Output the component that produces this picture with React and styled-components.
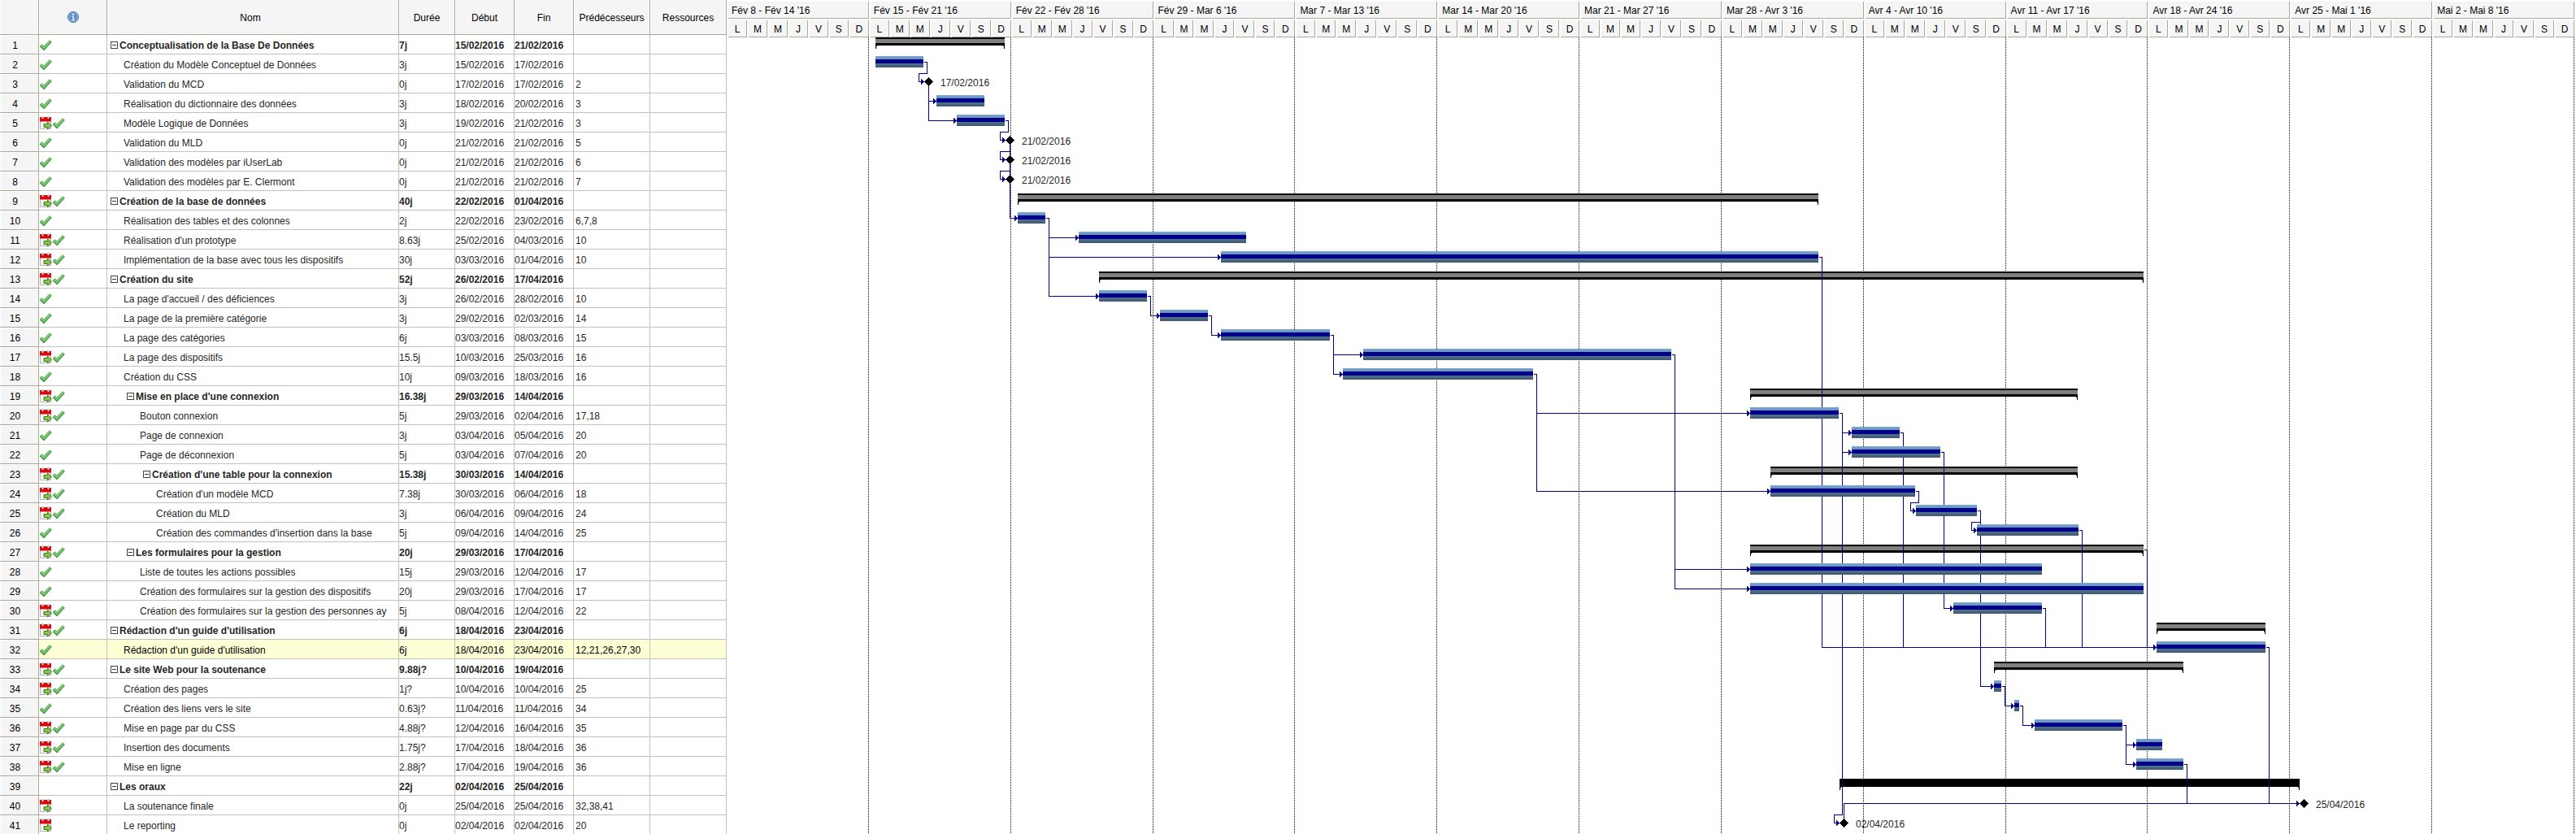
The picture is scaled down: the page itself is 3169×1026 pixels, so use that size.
import React, { useLayoutEffect, useRef, useState } from "react";
import styled, { createGlobalStyle, css } from "styled-components";

const GlobalStyle = createGlobalStyle`
  *, *::before, *::after { box-sizing: border-box; }
  body {
    margin: 0;
    background: #fff;
    color: #262626;
    font-family: "Liberation Sans", Arial, Helvetica, sans-serif;
    font-size: 12px;
    line-height: 14px;
  }
`;

const ROW = 24;
const FRAME = "#aca899";
const GRID = "#c0c0c0";
const NAVY = "#00008b";

/* id, icons (c = calendar, v = check), depth, name, duration, start, end, predecessors, bar start day, bar end day, kind */
const TASKS = [
  [1, "v", 0, "Conceptualisation de la Base De Données", "7j", "15/02/2016", "21/02/2016", "", 7.333, 13.69, "group"],
  [2, "v", 1, "Création du Modèle Conceptuel de Données", "3j", "15/02/2016", "17/02/2016", "", 7.333, 9.69, "task"],
  [3, "v", 1, "Validation du MCD", "0j", "17/02/2016", "17/02/2016", "2", 9.72, 9.72, "milestone"],
  [4, "v", 1, "Réalisation du dictionnaire des données", "3j", "18/02/2016", "20/02/2016", "3", 10.333, 12.69, "task"],
  [5, "cv", 1, "Modèle Logique de Données", "3j", "19/02/2016", "21/02/2016", "3", 11.333, 13.69, "task"],
  [6, "v", 1, "Validation du MLD", "0j", "21/02/2016", "21/02/2016", "5", 13.73, 13.73, "milestone"],
  [7, "v", 1, "Validation des modèles par iUserLab", "0j", "21/02/2016", "21/02/2016", "6", 13.73, 13.73, "milestone"],
  [8, "v", 1, "Validation des modèles par E. Clermont", "0j", "21/02/2016", "21/02/2016", "7", 13.73, 13.73, "milestone"],
  [9, "cv", 0, "Création de la base de données", "40j", "22/02/2016", "01/04/2016", "", 14.333, 53.77, "group"],
  [10, "v", 1, "Réalisation des tables et des colonnes", "2j", "22/02/2016", "23/02/2016", "6,7,8", 14.333, 15.7, "task"],
  [11, "cv", 1, "Réalisation d'un prototype", "8.63j", "25/02/2016", "04/03/2016", "10", 17.333, 25.58, "task"],
  [12, "cv", 1, "Implémentation de la base avec tous les dispositifs", "30j", "03/03/2016", "01/04/2016", "10", 24.333, 53.77, "task"],
  [13, "cv", 0, "Création du site", "52j", "26/02/2016", "17/04/2016", "", 18.333, 69.78, "group"],
  [14, "v", 1, "La page d'accueil / des déficiences", "3j", "26/02/2016", "28/02/2016", "10", 18.333, 20.7, "task"],
  [15, "v", 1, "La page de la première catégorie", "3j", "29/02/2016", "02/03/2016", "14", 21.333, 23.71, "task"],
  [16, "v", 1, "La page des catégories", "6j", "03/03/2016", "08/03/2016", "15", 24.333, 29.71, "task"],
  [17, "cv", 1, "La page des dispositifs", "15.5j", "10/03/2016", "25/03/2016", "16", 31.333, 46.54, "task"],
  [18, "v", 1, "Création du CSS", "10j", "09/03/2016", "18/03/2016", "16", 30.333, 39.72, "task"],
  [19, "cv", 1, "Mise en place d'une connexion", "16.38j", "29/03/2016", "14/04/2016", "", 50.4, 66.54, "group"],
  [20, "cv", 2, "Bouton connexion", "5j", "29/03/2016", "02/04/2016", "17,18", 50.4, 54.76, "task"],
  [21, "v", 2, "Page de connexion", "3j", "03/04/2016", "05/04/2016", "20", 55.41, 57.77, "task"],
  [22, "v", 2, "Page de déconnexion", "5j", "03/04/2016", "07/04/2016", "20", 55.41, 59.77, "task"],
  [23, "cv", 2, "Création d'une table pour la connexion", "15.38j", "30/03/2016", "14/04/2016", "", 51.4, 66.54, "group"],
  [24, "cv", 3, "Création d'un modèle MCD", "7.38j", "30/03/2016", "06/04/2016", "18", 51.4, 58.53, "task"],
  [25, "cv", 3, "Création du MLD", "3j", "06/04/2016", "09/04/2016", "24", 58.57, 61.57, "task"],
  [26, "v", 3, "Création des commandes d'insertion dans la base", "5j", "09/04/2016", "14/04/2016", "25", 61.57, 66.58, "task"],
  [27, "cv", 1, "Les formulaires pour la gestion", "20j", "29/03/2016", "17/04/2016", "", 50.4, 69.78, "group"],
  [28, "v", 2, "Liste de toutes les actions possibles", "15j", "29/03/2016", "12/04/2016", "17", 50.4, 64.77, "task"],
  [29, "v", 2, "Création des formulaires sur la gestion des dispositifs", "20j", "29/03/2016", "17/04/2016", "17", 50.4, 69.78, "task"],
  [30, "cv", 2, "Création des formulaires sur la gestion des personnes ay", "5j", "08/04/2016", "12/04/2016", "22", 60.42, 64.77, "task"],
  [31, "cv", 0, "Rédaction d'un guide d'utilisation", "6j", "18/04/2016", "23/04/2016", "", 70.42, 75.79, "group"],
  [32, "v", 1, "Rédaction d'un guide d'utilisation", "6j", "18/04/2016", "23/04/2016", "12,21,26,27,30", 70.42, 75.79, "task"],
  [33, "cv", 0, "Le site Web pour la soutenance", "9.88j?", "10/04/2016", "19/04/2016", "", 62.42, 71.75, "group"],
  [34, "cv", 1, "Création des pages", "1j?", "10/04/2016", "10/04/2016", "25", 62.42, 62.78, "task"],
  [35, "v", 1, "Création des liens vers le site", "0.63j?", "11/04/2016", "11/04/2016", "34", 63.42, 63.65, "task"],
  [36, "cv", 1, "Mise en page par du CSS", "4.88j?", "12/04/2016", "16/04/2016", "35", 64.42, 68.75, "task"],
  [37, "cv", 1, "Insertion des documents", "1.75j?", "17/04/2016", "18/04/2016", "36", 69.43, 70.7, "task"],
  [38, "cv", 1, "Mise en ligne", "2.88j?", "17/04/2016", "19/04/2016", "36", 69.43, 71.75, "task"],
  [39, "", 0, "Les oraux", "22j", "02/04/2016", "25/04/2016", "", 54.81, 77.47, "open"],
  [40, "c", 1, "La soutenance finale", "0j", "25/04/2016", "25/04/2016", "32,38,41", 77.45, 77.45, "milestone"],
  [41, "c", 1, "Le reporting", "0j", "02/04/2016", "02/04/2016", "20", 54.81, 54.81, "milestone"],
].map(([id, icons, depth, name, duration, start, end, preds, from, to, kind]) => ({
  id, icons, depth, name, duration, start, end, preds, from, to, kind,
  group: kind === "group" || kind === "open",
}));

const WEEKS = [
  "Fév 8 - Fév 14 '16", "Fév 15 - Fév 21 '16", "Fév 22 - Fév 28 '16", "Fév 29 - Mar 6 '16",
  "Mar 7 - Mar 13 '16", "Mar 14 - Mar 20 '16", "Mar 21 - Mar 27 '16", "Mar 28 - Avr 3 '16",
  "Avr 4 - Avr 10 '16", "Avr 11 - Avr 17 '16", "Avr 18 - Avr 24 '16", "Avr 25 - Mai 1 '16",
  "Mai 2 - Mai 8 '16",
];
const DAYS = ["L", "M", "M", "J", "V", "S", "D"];
const SELECTED = 32;

/* ---------- layout ---------- */
const Page = styled.main`
  display: flex;
  align-items: flex-start;
  overflow: hidden;
`;

const Sheet = styled.table`
  flex: none;
  width: 894px;
  table-layout: fixed;
  border-collapse: separate;
  border-spacing: 0;
`;

const Col = styled.col`
  width: ${(p) => p.$w}px;
`;

const raised = css`
  background: #f5f5f5;
  border-right: 1px solid ${FRAME};
  border-bottom: 1px solid ${FRAME};
  color: #000;
  font-weight: normal;
`;

const HeadCell = styled.th`
  ${raised}
  height: 43px;
  padding: 2px ${(p) => p.$end || 0}px 0 0;
  text-align: center;
  box-shadow: inset 1px 0 #fff;
`;

const Row = styled.tr`
  font-weight: ${(p) => (p.$bold ? "bold" : "normal")};
  color: ${(p) => (p.$selected ? "#000" : "inherit")};
  background: ${(p) => (p.$selected ? "#ffffd5" : "#fff")};
  &:last-child > * {
    height: ${ROW - 1}px;
    border-bottom: 0;
  }
`;

const NumberCell = styled.th`
  ${raised}
  height: ${ROW}px;
  padding: 2px 10px 0 0;
  text-align: center;
  box-shadow: inset 1px 1px #fff;
`;

const Cell = styled.td`
  height: ${ROW}px;
  padding: 2px 0 0 ${(p) => p.$pad || 0}px;
  border-right: 1px solid ${GRID};
  border-bottom: 1px solid ${GRID};
  white-space: nowrap;
  overflow: hidden;
`;

const IconCell = styled(Cell)`
  padding: 0;
`;

const IconRow = styled.div`
  display: flex;
`;

const NameBox = styled.div`
  display: flex;
  align-items: center;
  gap: 2px;
  padding-left: ${(p) => p.$depth * 20 + (p.$group ? 4 : 0)}px;
`;

const Toggle = styled.button`
  flex: none;
  display: grid;
  place-items: center;
  width: 9px;
  height: 9px;
  padding: 0;
  border: 1px solid #444;
  background: #fff;
  &::before {
    content: "";
    width: 5px;
    height: 1px;
    background: #333;
  }
`;

const Chart = styled.section`
  flex: 1;
  min-width: 0;
  padding-right: 2px;
`;

const ScaleRow = styled.div`
  display: grid;
  grid-template-columns: repeat(${(p) => p.$count}, minmax(0, 1fr));
  padding-top: 2px;
`;

const ScaleCell = styled.div`
  ${raised}
  height: 21px;
  margin-left: 2px;
  padding: ${(p) => (p.$week ? "4px 0 0 4px" : "4px 0 0")};
  text-align: ${(p) => (p.$week ? "left" : "center")};
  white-space: nowrap;
  overflow: hidden;
`;

const Canvas = styled.svg`
  display: block;
  width: 100%;
  height: ${TASKS.length * ROW - 4}px;
  overflow: hidden;
`;

const DateLabel = styled.text`
  fill: #262626;
`;

const Icon = styled.svg`
  display: block;
  flex: none;
`;

/* ---------- icons ---------- */
function CheckIcon() {
  return (
    <Icon width="16" height="18" viewBox="0 0 16 18" role="img" aria-label="Terminée">
      <path d="M2 9.800 L6 13.700 L14.400 4.500" fill="none" stroke="#4a9a48" strokeWidth="4" />
      <path d="M2.600 9.800 L6 12.900 L13.800 4.500" fill="none" stroke="#80cc74" strokeWidth="2" />
    </Icon>
  );
}

function CalendarIcon() {
  return (
    <Icon width="16" height="18" viewBox="0 0 16 18" role="img" aria-label="Contrainte de date">
      <rect x="1" y="2" width="14" height="15" fill="#f6f6f6" />
      <path d="M1.5 7v9.5h13V7" fill="none" stroke="#b4b4b4" />
      <rect x="1" y="2" width="14" height="5.500" fill="#d8090d" />
      <rect x="3.500" y="1" width="2" height="3" rx="1" fill="#e6e6e6" stroke="#999" strokeWidth=".5" />
      <rect x="10.500" y="1" width="2" height="3" rx="1" fill="#e6e6e6" stroke="#999" strokeWidth=".5" />
      <path d="M6 10.500h4.500V8l5 4.500-5 4.500v-2.500H6z" fill="#8cc152" stroke="#3b7d1c" />
    </Icon>
  );
}

function InfoIcon() {
  return (
    <svg width="14" height="14" viewBox="0 0 14 14" role="img" aria-label="Informations">
      <circle cx="7" cy="7" r="6.5" fill="#5b8fce" stroke="#3f6fae" />
      <circle cx="7" cy="7" r="5.4" fill="none" stroke="#a9c6ea" strokeWidth=".9" />
      <rect x="6" y="3" width="2" height="2" fill="#fff" />
      <path d="M5.5 6h2.5v4h1v1h-3.500v-1h1V7h-1z" fill="#fff" />
    </svg>
  );
}

/* ---------- chart drawing ---------- */
const topOf = (id) => (id - 1) * ROW - 3;
const lineOf = (id) => topOf(id) + 9;

function Summary({ x1, x2, top, solid }) {
  const y = top + 3;
  return (
    <g>
      <rect x={x1} y={y} width={x2 - x1} height="10" fill="#000" />
      {!solid && <rect x={x1} y={y + 2} width={x2 - x1} height="5" fill="#808080" />}
      <path d={`M${x1} ${y + 10}h2v1h-1v3h-1zM${x2} ${y + 10}h-2v1h1v3h1z`} fill="#000" />
    </g>
  );
}

function Bar({ x1, x2, top }) {
  const w = x2 - x1;
  return (
    <g>
      <rect x={x1} y={top + 2} width={w} height="14" fill="url(#steel)" />
      <rect x={x1} y={top + 6} width={w} height="5" fill={NAVY} />
    </g>
  );
}

function Milestone({ x, id, label }) {
  const y = lineOf(id);
  return (
    <g>
      <path d={`M${x} ${y + 0.5}l5.500-5.500 5.500 5.500-5.500 5.500z`} fill="#000" />
      <DateLabel x={x + 20} y={y + 6}>{label}</DateLabel>
    </g>
  );
}

function Link({ from, to, px }) {
  const y1 = lineOf(from.id);
  const y2 = lineOf(to.id);
  const end = px(from.to);
  const tip = px(to.from);
  const dot = from.kind === "milestone";
  const turn = end + (dot ? 5 : 4);
  const start = `M${dot ? turn : end} ${y1}H${turn}`;
  const straight = tip > turn;
  const d = straight
    ? `${start}V${y2}H${tip}`
    : `${start}V${topOf(to.id) - 1}H${tip - 7}V${y2}H${tip}`;
  return (
    <g>
      <path d={d} transform="translate(.5 .5)" fill="none" stroke={NAVY} />
      <path d={`M${tip - 4} ${y2 - 3}h1v1h1v1h1v3h-1v1h-1v1h-1z`} fill={NAVY} />
    </g>
  );
}

function Gantt() {
  const ref = useRef(null);
  const [width, setWidth] = useState(0);

  useLayoutEffect(() => {
    const measure = () => setWidth(ref.current.getBoundingClientRect().width);
    measure();
    window.addEventListener("resize", measure);
    return () => window.removeEventListener("resize", measure);
  }, []);

  const px = (day) => Math.round((day * width) / (WEEKS.length * 7));
  const height = TASKS.length * ROW - 4;
  const links = TASKS.flatMap((to) =>
    to.preds
      .split(",")
      .filter(Boolean)
      .map((p) => ({ from: TASKS[p - 1], to }))
  );

  return (
    <Canvas ref={ref} role="img" aria-label="Diagramme de Gantt" shapeRendering="crispEdges">
      <defs>
        <linearGradient id="steel" x1="0" y1="0" x2="0" y2="1">
          <stop offset="0" stopColor="#78a8d4" />
          <stop offset="1" stopColor="#3f566e" />
        </linearGradient>
      </defs>
      {width > 0 && (
        <>
          {WEEKS.map((w, i) => (
            <path key={w} d={`M${px((i + 1) * 7) - 0.5} 0V${height}`} stroke="#000" strokeDasharray="1 1" />
          ))}
          {TASKS.filter((t) => t.group).map((t) => (
            <Summary key={t.id} x1={px(t.from)} x2={px(t.to)} top={topOf(t.id)} solid={t.kind === "open"} />
          ))}
          {links.map(({ from, to }) => (
            <Link key={`${from.id}-${to.id}`} from={from} to={to} px={px} />
          ))}
          {TASKS.filter((t) => t.kind === "task").map((t) => (
            <Bar key={t.id} x1={px(t.from)} x2={px(t.to)} top={topOf(t.id)} />
          ))}
          {TASKS.filter((t) => t.kind === "milestone").map((t) => (
            <Milestone key={t.id} x={px(t.from)} id={t.id} label={t.end} />
          ))}
        </>
      )}
    </Canvas>
  );
}

function TaskRow({ task }) {
  return (
    <Row $bold={task.group} $selected={task.id === SELECTED}>
      <NumberCell scope="row">{task.id}</NumberCell>
      <IconCell>
        <IconRow>
          {task.icons.includes("c") && <CalendarIcon />}
          {task.icons.includes("v") && <CheckIcon />}
        </IconRow>
      </IconCell>
      <Cell>
        <NameBox $depth={task.depth} $group={task.group}>
          {task.group && <Toggle type="button" aria-label={`Réduire ${task.name}`} />}
          <span>{task.name}</span>
        </NameBox>
      </Cell>
      <Cell>{task.duration}</Cell>
      <Cell>{task.start}</Cell>
      <Cell>{task.end}</Cell>
      <Cell $pad={2}>{task.preds}</Cell>
      <Cell />
    </Row>
  );
}

export default function App() {
  return (
    <Page>
      <GlobalStyle />
      <Sheet>
        <colgroup>
          {[48, 84, 359, 69, 73, 73, 94, 94].map((w, i) => (
            <Col key={i} $w={w} />
          ))}
        </colgroup>
        <thead>
          <tr>
            <HeadCell />
            <HeadCell><InfoIcon /></HeadCell>
            <HeadCell $end={6}>Nom</HeadCell>
            <HeadCell>Durée</HeadCell>
            <HeadCell>Début</HeadCell>
            <HeadCell>Fin</HeadCell>
            <HeadCell>Prédécesseurs</HeadCell>
            <HeadCell>Ressources</HeadCell>
          </tr>
        </thead>
        <tbody>
          {TASKS.map((t) => (
            <TaskRow key={t.id} task={t} />
          ))}
        </tbody>
      </Sheet>
      <Chart>
        <ScaleRow $count={WEEKS.length}>
          {WEEKS.map((w) => (
            <ScaleCell key={w} $week>{w}</ScaleCell>
          ))}
        </ScaleRow>
        <ScaleRow $count={WEEKS.length * 7}>
          {WEEKS.flatMap((w) => DAYS.map((d, i) => <ScaleCell key={w + i}>{d}</ScaleCell>))}
        </ScaleRow>
        <Gantt />
      </Chart>
    </Page>
  );
}
